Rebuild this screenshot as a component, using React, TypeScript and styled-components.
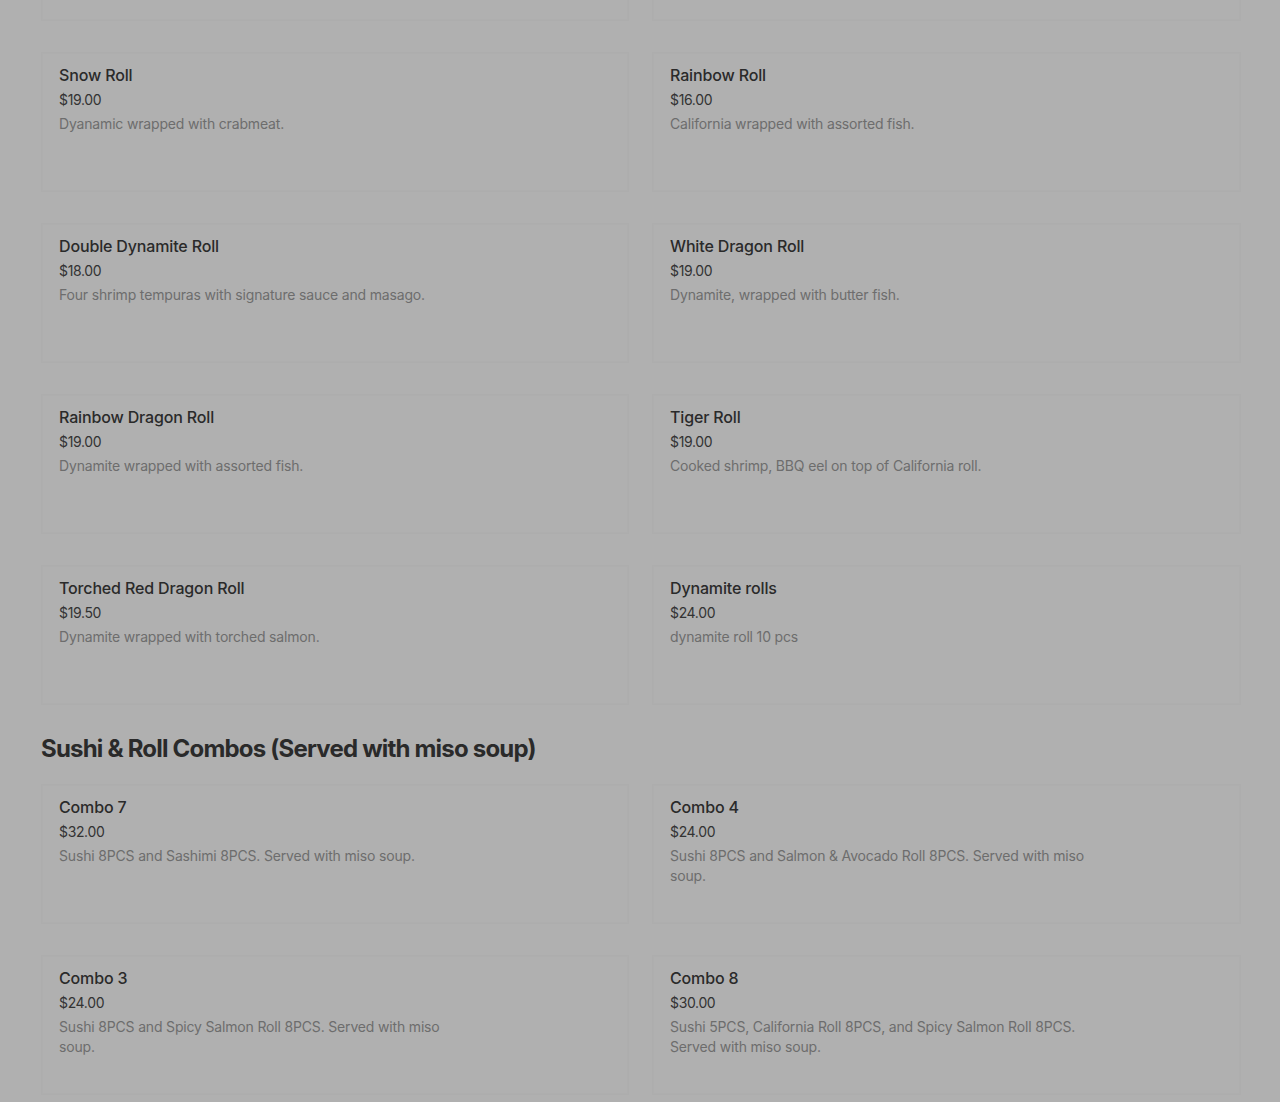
import React from "react";
import styled, { createGlobalStyle } from "styled-components";

const Global = createGlobalStyle`
  html, body { margin: 0; padding: 0; background: #b0b0b0; }
  body { font-family: Inter, "Noto Sans", Arial, sans-serif; overflow: hidden; }
  * { box-sizing: border-box; }
`;

type Item = { name: string; price: string; desc: string };

const rolls: Item[] = [
  { name: "Snow Roll", price: "$19.00", desc: "Dyanamic wrapped with crabmeat." },
  { name: "Rainbow Roll", price: "$16.00", desc: "California wrapped with assorted fish." },
  { name: "Double Dynamite Roll", price: "$18.00", desc: "Four shrimp tempuras with signature sauce and masago." },
  { name: "White Dragon Roll", price: "$19.00", desc: "Dynamite, wrapped with butter fish." },
  { name: "Rainbow Dragon Roll", price: "$19.00", desc: "Dynamite wrapped with assorted fish." },
  { name: "Tiger Roll", price: "$19.00", desc: "Cooked shrimp, BBQ eel on top of California roll." },
  { name: "Torched Red Dragon Roll", price: "$19.50", desc: "Dynamite wrapped with torched salmon." },
  { name: "Dynamite rolls", price: "$24.00", desc: "dynamite roll 10 pcs" },
];

const combos: Item[] = [
  { name: "Combo 7", price: "$32.00", desc: "Sushi 8PCS and Sashimi 8PCS. Served with miso soup." },
  { name: "Combo 4", price: "$24.00", desc: "Sushi 8PCS and Salmon & Avocado Roll 8PCS. Served with miso soup." },
  { name: "Combo 3", price: "$24.00", desc: "Sushi 8PCS and Spicy Salmon Roll 8PCS. Served with miso soup." },
  { name: "Combo 8", price: "$30.00", desc: "Sushi 5PCS, California Roll 8PCS, and Spicy Salmon Roll 8PCS. Served with miso soup." },
];

const Page = styled.div`
  width: 1280px;
  height: 1102px;
  overflow: hidden;
  padding: 0 39px 0 41px;
`;

const Shift = styled.div`
  margin-top: -119px;
  display: flex;
  flex-direction: column;
`;

const Grid = styled.ul`
  list-style: none;
  margin: 0;
  padding: 0;
  display: grid;
  grid-template-columns: 588px 589px;
  column-gap: 23px;
  row-gap: 31px;
`;

const Card = styled.li`
  height: 140px;
  border: 1px solid #adadad;
  box-shadow: inset 0 0 0 1px #aeaeae;
  padding: 10px 17px;
  display: flex;
  flex-direction: column;
`;

const Title = styled.div`
  font-size: 16px;
  font-weight: 500;
  line-height: 24px;
  color: #2a2a2a;
  letter-spacing: -0.15px;
`;

const Price = styled.div`
  margin-top: 3px;
  font-size: 14px;
  line-height: 20px;
  color: #333333;
  letter-spacing: -0.35px;
`;

const Desc = styled.div`
  margin-top: 4px;
  max-width: 416px;
  font-size: 14px;
  line-height: 20px;
  color: #6d6d6d;
  letter-spacing: -0.17px;
`;

const Heading = styled.h2`
  margin: 0;
  padding: 31px 0 22px;
  font-size: 24px;
  line-height: 26px;
  font-weight: 700;
  color: #2a2a2a;
  letter-spacing: -0.8px;
`;

function Items({ items, blanks = 0 }: { items: Item[]; blanks?: number }) {
  return (
    <Grid>
      {Array.from({ length: blanks }).map((_, i) => (
        <Card key={`blank-${i}`} aria-hidden />
      ))}
      {items.map((it) => (
        <Card key={it.name}>
          <Title>{it.name}</Title>
          <Price>{it.price}</Price>
          <Desc>{it.desc}</Desc>
        </Card>
      ))}
    </Grid>
  );
}

export default function App() {
  return (
    <>
      <Global />
      <Page>
        <Shift>
          <Items items={rolls} blanks={2} />
          <Heading>Sushi &amp; Roll Combos (Served with miso soup)</Heading>
          <Items items={combos} />
        </Shift>
      </Page>
    </>
  );
}
